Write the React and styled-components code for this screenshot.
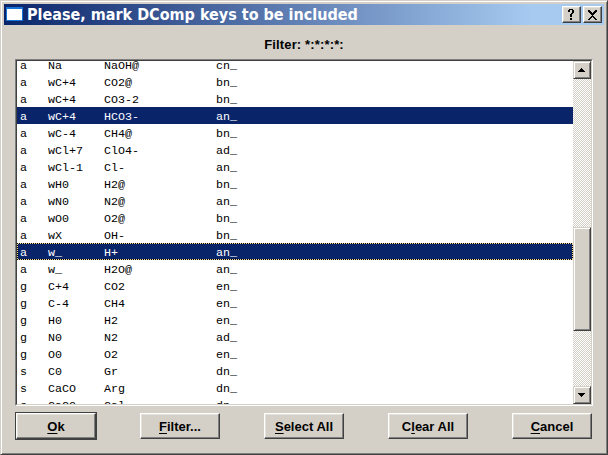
import React from "react";
import styled, { createGlobalStyle, css } from "styled-components";

const Global = createGlobalStyle`
  * { box-sizing: border-box; }
  body { margin: 0; overflow: hidden; background: #d4d0c8; }
`;

const raised = css`
  border: 1px solid;
  border-color: #fff #404040 #404040 #fff;
  box-shadow: inset -1px -1px #808080, inset 1px 1px #e4e1d9;
  background: #d4d0c8;
`;

const Dialog = styled.div`
  width: 608px;
  height: 455px;
  display: flex;
  flex-direction: column;
  background: #d4d0c8;
  border: 1px solid;
  border-color: #d4d0c8 #404040 #404040 #d4d0c8;
  box-shadow: inset 1px 1px #fff, inset -1px -1px #808080;
  padding: 3px;
`;

const TitleBar = styled.header`
  flex: none;
  height: 21px;
  display: flex;
  align-items: center;
  background: linear-gradient(to right, #0a246a, #a6caf0 88%);
  padding: 0 2px;
`;

const Title = styled.h1`
  flex: 1;
  margin: 0 0 0 4px;
  font: bold 16px/21px "DejaVu Sans Condensed", "DejaVu Sans", sans-serif;
  font-stretch: condensed;
  white-space: nowrap;
  color: #fff;
`;

const CaptionButton = styled.button`
  ${raised}
  width: 19px;
  height: 17px;
  padding: 0;
  margin-left: 2px;
  display: flex;
`;

const FilterLabel = styled.div`
  flex: none;
  height: 34px;
  padding-top: 12px;
  text-align: center;
  font: bold 13px/16px "Liberation Sans", Arial, sans-serif;
  letter-spacing: 0.15px;
  color: #000;
`;

const ListBox = styled.section`
  flex: none;
  width: 578px;
  height: 347px;
  margin-left: 11px;
  display: flex;
  border: 1px solid;
  border-color: #808080 #fff #fff #808080;
  background: #fff;
`;

const ListInner = styled.div`
  flex: 1;
  display: flex;
  border: 1px solid;
  border-color: #404040 #d4d0c8 #d4d0c8 #404040;
`;

const Rows = styled.div`
  flex: 1;
  overflow: hidden;
`;

const Scrolled = styled.div`
  margin-top: -5px;
`;

const Row = styled.div`
  height: 17px;
  padding: 2px 0 0 3px;
  display: grid;
  grid-template-columns: 28px 56px 112px 1fr;
  font: 11.667px/16px "Liberation Mono", "Courier New", monospace;
  white-space: pre;
  color: ${(p) => (p.$selected ? "#fff" : "#000")};
  background: ${(p) => (p.$selected ? "#0a246a" : "transparent")};
  ${(p) =>
    p.$focused &&
    css`
      background:
        repeating-linear-gradient(to right, #000 0 1px, #f5db95 1px 2px) 0 0 / 100% 1px no-repeat,
        repeating-linear-gradient(to right, #000 0 1px, #f5db95 1px 2px) 0 100% / 100% 1px no-repeat,
        repeating-linear-gradient(to bottom, #000 0 1px, #f5db95 1px 2px) 0 0 / 1px 100% no-repeat,
        repeating-linear-gradient(to bottom, #000 0 1px, #f5db95 1px 2px) 100% 0 / 1px 100% no-repeat,
        #0a246a;
    `}
`;

const ScrollBar = styled.div`
  width: 18px;
  display: flex;
  flex-direction: column;
  background: repeating-conic-gradient(#d4d0c8 0 25%, #fff 0 50%) 0 0 / 2px 2px;
`;

const ScrollPart = styled.div`
  flex: none;
  height: ${(p) => p.$h}px;
  margin-top: ${(p) => p.$gap || 0}px;
  background: #d4d0c8;
  border: 1px solid;
  border-color: #d4d0c8 #404040 #404040 #d4d0c8;
  box-shadow: inset 1px 1px #fff, inset -1px -1px #808080;
  display: flex;
`;

const Footer = styled.footer`
  height: 40px;
  padding: 6px 12px 0 11px;
  display: flex;
  justify-content: space-between;
  align-items: flex-start;
`;

const PushButton = styled.button`
  ${raised}
  width: 80px;
  height: 26px;
  margin-top: 1px;
  padding: 1px 0 0;
  font: bold 13px/16px "Liberation Sans", Arial, sans-serif;
  color: #000;
  ${(p) =>
    p.$primary &&
    css`
      outline: 1px solid #404040;
      margin-left: 1px;
    `}
`;

const Key = styled.span`
  text-decoration: underline;
  text-underline-offset: 2px;
  text-decoration-thickness: 1px;
  text-decoration-skip-ink: none;
`;

const rows = [
  ["a", "Na", "NaOH@", "cn_"],
  ["a", "wC+4", "CO2@", "bn_"],
  ["a", "wC+4", "CO3-2", "bn_"],
  ["a", "wC+4", "HCO3-", "an_", "selected"],
  ["a", "wC-4", "CH4@", "bn_"],
  ["a", "wCl+7", "ClO4-", "ad_"],
  ["a", "wCl-1", "Cl-", "an_"],
  ["a", "wH0", "H2@", "bn_"],
  ["a", "wN0", "N2@", "an_"],
  ["a", "wO0", "O2@", "bn_"],
  ["a", "wX", "OH-", "bn_"],
  ["a", "w_", "H+", "an_", "focused"],
  ["a", "w_", "H2O@", "an_"],
  ["g", "C+4", "CO2", "en_"],
  ["g", "C-4", "CH4", "en_"],
  ["g", "H0", "H2", "en_"],
  ["g", "N0", "N2", "ad_"],
  ["g", "O0", "O2", "en_"],
  ["s", "C0", "Gr", "dn_"],
  ["s", "CaCO", "Arg", "dn_"],
  ["s", "CaCO", "Cal", "dn_"],
];

const buttons = [
  ["", "O", "k"],
  ["", "F", "ilter..."],
  ["", "S", "elect All"],
  ["C", "l", "ear All"],
  ["", "C", "ancel"],
];

const WindowIcon = () => (
  <svg width="17" height="17" shapeRendering="crispEdges">
    <rect width="17" height="14" y="1" fill="#1673d6" />
    <rect x="1" y="3" width="15" height="11" fill="#fff" />
  </svg>
);

export default function App() {
  return (
    <>
      <Global />
      <Dialog>
        <TitleBar>
          <WindowIcon />
          <Title>Please, mark DComp keys to be included</Title>
          <CaptionButton aria-label="Help">
            <svg width="17" height="15" shapeRendering="crispEdges">
              <path d="M6 2h4v1h1v3h-1v1h-1v3h-2v-3h1v-1h1v-3h-2v2h-2v-2h1zM7 11h2v2h-2z" />
            </svg>
          </CaptionButton>
          <CaptionButton aria-label="Close">
            <svg width="17" height="15" shapeRendering="crispEdges">
              <path d="M4 3h2v1h1v1h1v1h1v-1h1v-1h1v-1h2v2h-1v1h-1v1h-1v1h-1v1h1v1h1v1h1v1h1v1h-2v-1h-1v-1h-1v-1h-1v1h-1v1h-1v1h-2v-1h1v-1h1v-1h1v-1h1v-1h-1v-1h-1v-1h-1v-1h-1z" />
            </svg>
          </CaptionButton>
        </TitleBar>
        <FilterLabel>Filter: *:*:*:*:</FilterLabel>
        <ListBox>
          <ListInner>
            <Rows>
              <Scrolled>
                {rows.map(([phase, group, name, code, state], i) => (
                  <Row key={i} $selected={!!state} $focused={state === "focused"}>
                    <span>{phase}</span>
                    <span>{group}</span>
                    <span>{name}</span>
                    <span>{code}</span>
                  </Row>
                ))}
              </Scrolled>
            </Rows>
            <ScrollBar>
              <ScrollPart $h={18}>
                <svg width="16" height="16" shapeRendering="crispEdges">
                  <path d="M7 6h1v1h1v1h1v1h1v1h-7v-1h1v-1h1v-1h1z" />
                </svg>
              </ScrollPart>
              <ScrollPart $h={104} $gap={148} />
              <ScrollPart $h={18} $gap={55}>
                <svg width="16" height="16" shapeRendering="crispEdges">
                  <path d="M4 6h7v1h-1v1h-1v1h-1v1h-1v-1h-1v-1h-1v-1h-1z" />
                </svg>
              </ScrollPart>
            </ScrollBar>
          </ListInner>
        </ListBox>
        <Footer>
          {buttons.map(([before, key, after], i) => (
            <PushButton key={i} $primary={i === 0}>
              {before}
              <Key>{key}</Key>
              {after}
            </PushButton>
          ))}
        </Footer>
      </Dialog>
    </>
  );
}
